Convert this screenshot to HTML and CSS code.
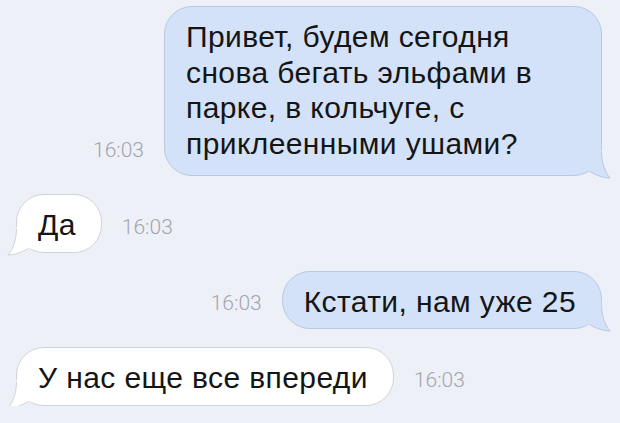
FILE: index.html
```html
<!DOCTYPE html>
<html lang="ru">
<head>
    <meta charset="UTF-8">
    <meta name="viewport" content="width=device-width, initial-scale=1.0">
    <title>Сообщения</title>
    <link rel="stylesheet" href="styles.css">
</head>
<body>
    <div class="chat">
        <div class="row out">
            <span class="time">16:03</span>
            <div class="bubble long">
                Привет, будем сегодня снова бегать эльфами в парке, в кольчуге, с приклеенными ушами?
                <svg class="tail" viewBox="0 0 34 30" width="34" height="30">
                    <path class="tail-fill" d="M10.5 -2 L10.5 0 C10.5 9 8 19 2 26 C10 26 17 22.5 22.5 19.5 L28 19.5 L28 -2 Z"/>
                    <path class="tail-line" d="M10.5 0 C10.5 9 8 19 2 26 C10 26 17 22.5 22.5 19.5"/>
                </svg>
            </div>
        </div>

        <div class="row in">
            <div class="bubble">
                Да
                <svg class="tail" viewBox="0 0 34 30" width="34" height="30">
                    <path class="tail-fill" d="M10.5 -2 L10.5 0 C10.5 9 8 19 2 26 C10 26 17 22.5 22.5 19.5 L28 19.5 L28 -2 Z"/>
                    <path class="tail-line" d="M10.5 0 C10.5 9 8 19 2 26 C10 26 17 22.5 22.5 19.5"/>
                </svg>
            </div>
            <span class="time">16:03</span>
        </div>

        <div class="row out">
            <span class="time">16:03</span>
            <div class="bubble">
                Кстати, нам уже 25
                <svg class="tail" viewBox="0 0 34 30" width="34" height="30">
                    <path class="tail-fill" d="M10.5 -2 L10.5 0 C10.5 9 8 19 2 26 C10 26 17 22.5 22.5 19.5 L28 19.5 L28 -2 Z"/>
                    <path class="tail-line" d="M10.5 0 C10.5 9 8 19 2 26 C10 26 17 22.5 22.5 19.5"/>
                </svg>
            </div>
        </div>

        <div class="row in">
            <div class="bubble">
                У нас еще все впереди
                <svg class="tail" viewBox="0 0 34 30" width="34" height="30">
                    <path class="tail-fill" d="M10.5 -2 L10.5 0 C10.5 9 8 19 2 26 C10 26 17 22.5 22.5 19.5 L28 19.5 L28 -2 Z"/>
                    <path class="tail-line" d="M10.5 0 C10.5 9 8 19 2 26 C10 26 17 22.5 22.5 19.5"/>
                </svg>
            </div>
            <span class="time">16:03</span>
        </div>
    </div>
</body>
</html>
```

FILE: styles.css
```css
body {
    margin: 0;
    padding: 0;
    background-color: #edf0f7;
    font-family: "Liberation Sans", Arial, sans-serif;
    color: #151515;
}

.chat {
    display: flex;
    flex-direction: column;
    gap: 18px;
    padding: 6px 18px 0 16px;
}

.row {
    display: flex;
    align-items: flex-end;
    gap: 20px;
}

.row.out {
    justify-content: flex-end;
}

.bubble {
    position: relative;
    padding: 12px 25px 9px 21px;
    font-size: 30px;
    letter-spacing: 0.4px;
    line-height: 35.5px;
    border-radius: 28px;
    border: 1px solid #cfd3da;
    background-color: #ffffff;
}

.bubble.long {
    width: 438px;
    box-sizing: border-box;
    padding-right: 40px;
    padding-bottom: 14px;
}

.out .bubble {
    background-color: #d3e2f8;
    border-color: #b8c9e2;
}

.time {
    font-family: Roboto, "Liberation Sans", sans-serif;
    font-weight: 300;
    font-size: 21px;
    line-height: 21px;
    color: #a1a5ad;
    padding-bottom: 15px;
}

/* little curl at the bottom corner */
.tail {
    position: absolute;
    left: -11px;
    bottom: -7px;
    overflow: visible;
}

.out .tail {
    left: auto;
    right: -11px;
    transform: scaleX(-1);
}

.tail-line {
    fill: none;
    stroke-width: 1;
}

.in .tail-fill {
    fill: #ffffff;
}

.in .tail-line {
    stroke: #cfd3da;
}

.out .tail-fill {
    fill: #d3e2f8;
}

.out .tail-line {
    stroke: #b8c9e2;
}
```
